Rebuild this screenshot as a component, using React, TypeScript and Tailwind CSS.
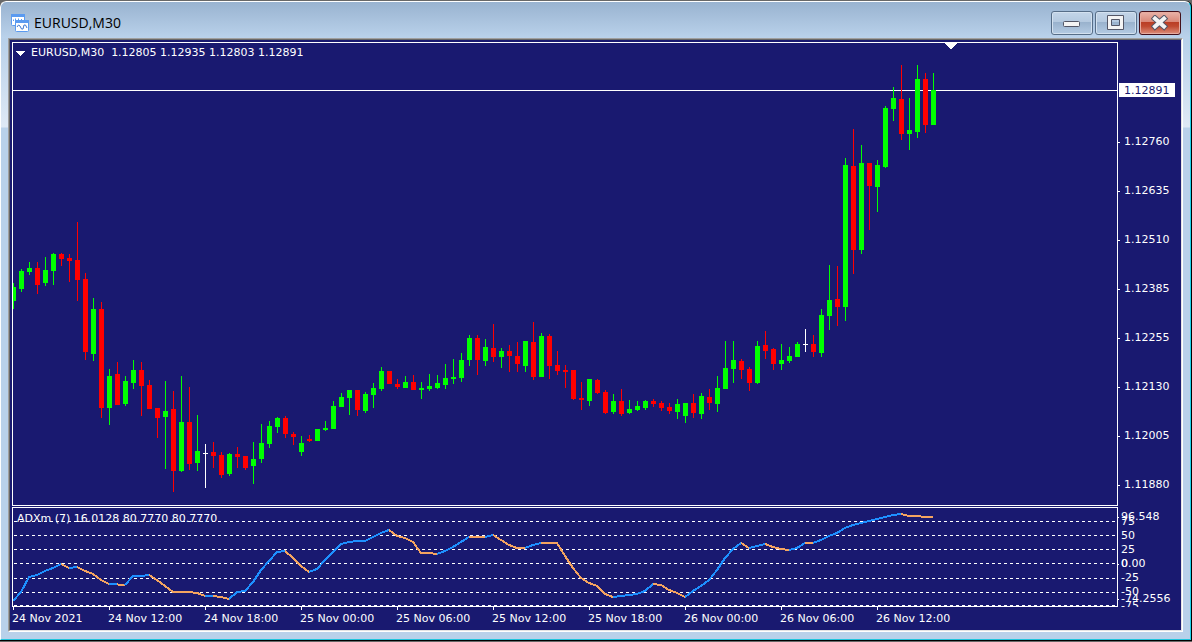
type Candle = [high: number, top: number, bottom: number, low: number, tone: "g" | "r" | "w"];

// one entry per half-hour bar, 8px apart, in window pixels
const CANDLES: Candle[] = [
  [283, 287, 301, 309, "g"], [269, 271, 289, 292, "g"], [262, 268, 272, 275, "g"], [262, 268, 285, 294, "r"],
  [257, 270, 283, 286, "g"], [253, 254, 271, 285, "g"], [253, 254, 259, 266, "r"], [254, 258, 261, 282, "r"],
  [222, 260, 280, 301, "r"], [273, 279, 352, 360, "r"], [298, 309, 354, 361, "g"], [302, 309, 408, 418, "r"],
  [369, 376, 408, 425, "g"], [362, 374, 405, 405, "r"], [376, 381, 404, 406, "g"], [360, 370, 383, 389, "g"],
  [362, 370, 386, 416, "r"], [380, 385, 409, 409, "r"], [408, 408, 418, 438, "r"], [381, 411, 417, 469, "g"],
  [391, 409, 471, 492, "r"], [376, 422, 471, 472, "g"], [387, 422, 464, 470, "r"], [415, 451, 463, 471, "g"],
  [444, 453, 454, 488, "w"], [442, 452, 456, 468, "r"], [452, 455, 475, 478, "r"], [453, 454, 474, 476, "g"],
  [447, 454, 457, 468, "r"], [456, 456, 468, 470, "r"], [442, 459, 466, 484, "g"], [424, 443, 459, 463, "g"],
  [421, 426, 444, 448, "g"], [417, 418, 427, 433, "g"], [416, 418, 434, 438, "r"], [432, 434, 437, 445, "r"],
  [436, 443, 452, 456, "g"], [435, 439, 441, 442, "r"], [429, 429, 441, 441, "g"], [421, 428, 430, 431, "g"],
  [401, 406, 429, 429, "g"], [393, 397, 407, 407, "g"], [390, 390, 398, 415, "g"], [390, 390, 410, 416, "r"],
  [392, 394, 411, 413, "g"], [383, 388, 395, 408, "g"], [367, 371, 389, 391, "g"], [371, 371, 384, 384, "r"],
  [379, 384, 387, 389, "r"], [376, 382, 388, 388, "g"], [375, 382, 390, 390, "r"], [382, 388, 390, 399, "g"],
  [374, 386, 389, 391, "g"], [375, 383, 388, 389, "g"], [364, 378, 385, 389, "g"], [359, 377, 379, 384, "g"],
  [353, 360, 378, 382, "g"], [335, 338, 360, 366, "g"], [335, 338, 360, 375, "r"], [339, 347, 361, 366, "g"],
  [324, 348, 357, 362, "r"], [348, 351, 357, 368, "g"], [345, 351, 356, 372, "r"], [342, 356, 364, 372, "r"],
  [341, 341, 366, 372, "g"], [322, 342, 377, 380, "r"], [333, 336, 377, 377, "g"], [334, 336, 366, 379, "r"],
  [351, 365, 371, 375, "r"], [365, 370, 372, 388, "r"], [370, 370, 399, 400, "r"], [382, 398, 400, 410, "r"],
  [379, 379, 401, 406, "g"], [379, 380, 393, 394, "r"], [390, 392, 413, 414, "r"], [394, 401, 412, 414, "g"],
  [389, 401, 414, 416, "r"], [400, 409, 413, 414, "g"], [401, 406, 410, 411, "g"], [400, 401, 408, 410, "g"],
  [399, 401, 404, 407, "r"], [401, 403, 408, 411, "r"], [403, 407, 411, 414, "r"], [399, 404, 412, 419, "g"],
  [403, 403, 416, 423, "g"], [394, 403, 413, 418, "r"], [393, 396, 414, 419, "g"], [389, 397, 403, 410, "r"],
  [376, 388, 404, 412, "g"], [341, 368, 389, 389, "g"], [341, 360, 369, 383, "g"], [359, 361, 370, 379, "r"],
  [367, 369, 383, 391, "r"], [341, 346, 383, 384, "g"], [331, 345, 351, 359, "r"], [348, 349, 364, 370, "r"],
  [344, 360, 364, 370, "g"], [347, 356, 361, 363, "g"], [342, 344, 357, 357, "g"], [329, 344, 345, 352, "w"],
  [335, 344, 352, 357, "r"], [309, 315, 353, 357, "g"], [265, 300, 316, 330, "g"], [266, 299, 307, 326, "r"],
  [158, 165, 307, 321, "g"], [129, 166, 250, 274, "r"], [145, 163, 250, 254, "g"], [163, 163, 186, 230, "r"],
  [160, 165, 187, 212, "g"], [106, 108, 167, 168, "g"], [87, 98, 109, 121, "g"], [65, 99, 134, 140, "r"],
  [98, 130, 134, 150, "g"], [65, 79, 132, 138, "g"], [73, 79, 125, 133, "r"], [73, 90, 125, 125, "g"],
];

const TONES = { g: "#00ff00", r: "#ff0000", w: "#ffffff" };

const RISING = "#1e90ff";
const FALLING = "#f4a460";

// each run starts where the previous one ended
const ADX_RUNS: { color: string; points: string }[] = [
  { color: RISING, points: "13,601 21,592 29,577 37,575 45,571 53,568 61,564" },
  { color: FALLING, points: "61,564 69,568" },
  { color: RISING, points: "69,568 77,567" },
  { color: FALLING, points: "77,567 85,571 93,574 101,580 109,584" },
  { color: RISING, points: "109,584 117,584" },
  { color: FALLING, points: "117,584 119,585 125,585" },
  { color: RISING, points: "125,585 133,576 141,576 149,575" },
  { color: FALLING, points: "149,575 157,580 165,586 173,592 181,592 189,592 197,593 205,596" },
  { color: RISING, points: "205,596 213,596" },
  { color: FALLING, points: "213,596 221,597 229,599" },
  { color: RISING, points: "229,599 237,592 245,591 253,582 261,570 269,561 277,552 285,551" },
  { color: FALLING, points: "285,551 293,558 301,566 309,572" },
  { color: RISING, points: "309,572 317,569 325,560 333,552 341,544 349,542 357,541 365,541 373,537 381,533 389,530" },
  { color: FALLING, points: "389,530 397,536 405,538 413,542 421,553 429,553 437,554" },
  { color: RISING, points: "437,554 445,551 453,547 461,542 469,537" },
  { color: FALLING, points: "469,537 477,537 485,537" },
  { color: RISING, points: "485,537 493,535" },
  { color: FALLING, points: "493,535 501,540 509,545 517,548 525,548" },
  { color: RISING, points: "525,548 533,545 541,543" },
  { color: FALLING, points: "541,543 549,543 557,543 565,556 573,568 581,578 589,583 597,586 605,594 613,597" },
  { color: RISING, points: "613,597 621,596 629,595 637,594 645,591 653,584" },
  { color: FALLING, points: "653,584 661,585 669,590 677,593 685,597" },
  { color: RISING, points: "685,597 693,591 701,586 709,580 717,570 725,558 733,549 741,543" },
  { color: FALLING, points: "741,543 749,548" },
  { color: RISING, points: "749,548 757,546 765,544" },
  { color: FALLING, points: "765,544 773,547 781,549 789,550" },
  { color: RISING, points: "789,550 797,548 805,543" },
  { color: FALLING, points: "805,543 813,543" },
  { color: RISING, points: "813,543 821,540 829,536 837,533 845,528 853,525 861,523 869,521 877,519 885,517 893,515 901,514" },
  { color: FALLING, points: "901,514 909,516 917,516 925,517 933,517" },
];

const LEVEL_LINES = [521, 535, 549, 563, 578, 592, 605];
const LEVEL_LABELS = ["75", "50", "25", "0", "-25", "-50", "-75"];

const PRICES = ["1.12760", "1.12635", "1.12510", "1.12385", "1.12255", "1.12130", "1.12005", "1.11880"];

const TIMES = [
  "24 Nov 2021",
  "24 Nov 12:00",
  "24 Nov 18:00",
  "25 Nov 00:00",
  "25 Nov 06:00",
  "25 Nov 12:00",
  "25 Nov 18:00",
  "26 Nov 00:00",
  "26 Nov 06:00",
  "26 Nov 12:00",
];

export default function App() {
  return (
    <div className="min-h-screen flex flex-col bg-[#686868] pt-px font-['DejaVu_Sans',sans-serif]">
      <div className="flex-1 flex flex-col rounded-t-md border-r border-b border-black mb-px bg-black">
        <div className="flex-1 flex flex-col rounded-t-md border border-t-white border-l-white border-r-[#1fd3ea] border-b-[#1fc4dc] bg-[linear-gradient(#b9d1ea_40px,#dfe9f5_125px,#b9d1ea_126px)]">
          <TitleBar />
          <main className="flex-1 flex flex-col mx-[7px] mb-[7px] border border-t-[#a0a0a0] border-l-[#a0a0a0] border-r-white border-b-white">
            <div className="flex-1 flex flex-col border border-t-[#696969] border-l-[#696969] border-r-[#e3e3e3] border-b-[#e3e3e3]">
              <Chart />
            </div>
          </main>
        </div>
      </div>
    </div>
  );
}

function TitleBar() {
  return (
    <header className="h-9 pt-1.5 pl-2.5 pr-[9px] flex items-center rounded-t-md bg-linear-to-b from-[#99b3d0] to-[#bad2eb]">
      <ChartIcon />
      <h1 className="ml-[5px] flex-1 text-sm text-black font-['Open_Sans',sans-serif]">EURUSD,M30</h1>
      <div className="flex gap-0.5">
        <button
          type="button"
          aria-label="Minimize"
          className="w-[42px] h-6 flex items-center justify-center rounded-[3px] border border-[#566d87] bg-[linear-gradient(#c3d5e8,#b4c9df_45%,#98b1cc_45%,#b4cbe3)] shadow-[inset_0_0_0_1px_#d3e1ef]"
        >
          <svg width="18" height="16" viewBox="0 0 18 16">
            <rect x=".5" y="6.5" width="16" height="5" rx="1" fill="#f4f4f4" stroke="#535666" />
          </svg>
        </button>
        <button
          type="button"
          aria-label="Maximize"
          className="w-[42px] h-6 flex items-center justify-center rounded-[3px] border border-[#566d87] bg-[linear-gradient(#c3d5e8,#b4c9df_45%,#98b1cc_45%,#b4cbe3)] shadow-[inset_0_0_0_1px_#d3e1ef]"
        >
          <svg width="18" height="16" viewBox="0 0 18 16">
            <path
              d="M.5 .5h16v14h-16zM4.500 4.500v6h8v-6z"
              fill="#f4f4f4"
              fillRule="evenodd"
              stroke="#535666"
              strokeLinejoin="round"
            />
          </svg>
        </button>
        <button
          type="button"
          aria-label="Close"
          className="w-[42px] h-6 flex items-center justify-center rounded-[3px] border border-[#43101a] bg-[linear-gradient(#e9b3a9,#d98878_45%,#b93d24_45%,#c04a30_65%,#dc8f7c)] shadow-[inset_0_0_0_1px_#e6aca0]"
        >
          <svg width="18" height="16" viewBox="0 0 18 16" fill="none" strokeLinecap="square">
            <path d="M4 3.500l9 8M13 3.500l-9 8" stroke="#535666" strokeWidth="6" />
            <path d="M4 3.500l9 8M13 3.500l-9 8" stroke="#f4f4f4" strokeWidth="4" />
          </svg>
        </button>
      </div>
    </header>
  );
}

function ChartIcon() {
  return (
    <svg width="18" height="18" viewBox="0 0 18 18" aria-hidden="true">
      <rect x=".5" y=".5" width="13" height="11" rx="1" fill="#fff" stroke="#5a9af0" />
      <path d="M0 0h14v3H0z" fill="#5a9af0" />
      <path d="M2.500 7V5.500M4.500 7V4.500M7.500 6V4.500M10.500 6V5" stroke="#5a9af0" />
      <rect x="4.500" y="6.500" width="13" height="11" rx="1" fill="#fff" stroke="#5a9af0" />
      <path d="M4 6h14v3H4z" fill="#5a9af0" />
      <path d="M6 13l1.500-2 1.500 1 1.500 3 1.500 0 1-4 1.500 0 1.500 3" fill="none" stroke="#3f78d0" />
    </svg>
  );
}

function Chart() {
  return (
    <div className="flex-1 grid grid-cols-[minmax(0,1fr)_63px] grid-rows-[minmax(464px,1fr)_101px_23px] pt-0.5 pl-0.5 bg-[#191970] text-white text-[11px]">
      <section aria-label="Price" className="relative border border-white overflow-hidden">
        <PricePlot />
        <div className="absolute top-px left-[3px] flex items-center gap-1 leading-[18px] whitespace-pre">
          <svg width="9" height="5" viewBox="0 0 9 5" shapeRendering="crispEdges">
            <path d="M0 0h9L5 5H4z" fill="#fff" />
          </svg>
          <span className="ml-0.5">EURUSD,M30  1.12805 1.12935 1.12803 1.12891</span>
        </div>
      </section>

      <div className="relative pt-[91px] flex flex-col gap-[31px]">
        {PRICES.map((price) => (
          <div key={price} className="h-[18px] flex items-center">
            <span className="w-0.5 h-px bg-white" />
            <span className="ml-1">{price}</span>
          </div>
        ))}
        {/* current bid */}
        <div className="absolute top-[41px] left-px w-14 h-3.5 pl-[5px] leading-4 bg-white text-[#191970]">
          1.12891
        </div>
      </div>

      <section aria-label="ADXm" className="relative mt-px border border-white overflow-hidden">
        <AdxPlot />
        <div className="absolute top-0.5 left-1 leading-[18px]">ADXm (7) 16.0128 80.7770 80.7770</div>
      </section>

      <div className="relative">
        <div className="h-[101px] pt-[9px] pl-[3px] overflow-hidden leading-[14px]">
          {LEVEL_LABELS.map((level) => (
            <div key={level}>{level}</div>
          ))}
        </div>
        {/* scale maximum, zero and minimum print over the level labels */}
        <div className="absolute inset-0 pt-1 flex flex-col leading-[14px]">
          <ScaleLabel>96.548</ScaleLabel>
          <div className="mt-[33px]">
            <ScaleLabel>0.00</ScaleLabel>
          </div>
          <div className="mt-[21px]">
            <ScaleLabel>-74.2556</ScaleLabel>
          </div>
        </div>
      </div>

      <div className="col-span-2 flex overflow-hidden">
        {TIMES.map((time) => (
          <div key={time} className="w-24 shrink-0 whitespace-nowrap">
            <div className="ml-px w-px h-[3px] bg-white" />
            <div className="leading-[18px]">{time}</div>
          </div>
        ))}
      </div>
    </div>
  );
}

function ScaleLabel({ children }: { children: string }) {
  return (
    <div className="flex items-center">
      <span className="w-px h-px bg-white" />
      <span className="ml-0.5">{children}</span>
    </div>
  );
}

function PricePlot() {
  return (
    <svg className="block w-full h-full" shapeRendering="crispEdges" role="img" aria-label="EURUSD candles">
      <rect y="47" width="100%" height="1" fill="#fff" />
      <g transform="translate(-13 -43)">
        <path d="M944 43h13l-6 6h-1z" fill="#fff" />
        {CANDLES.map(([high, top, bottom, low, tone], i) => {
          const x = 13 + i * 8;
          return (
            <g key={i} fill={TONES[tone]}>
              <rect x={x} y={high} width="1" height={low - high} />
              <rect x={x - 2} y={top} width="5" height={bottom - top} />
            </g>
          );
        })}
      </g>
    </svg>
  );
}

function AdxPlot() {
  return (
    <svg className="block w-full h-full" shapeRendering="crispEdges" role="img" aria-label="ADXm line">
      {LEVEL_LINES.map((y) => (
        <line
          key={y}
          x1="1"
          x2="100%"
          y1={y - 507.5}
          y2={y - 507.5}
          stroke="#fff"
          strokeDasharray="3 3"
        />
      ))}
      <g transform="translate(-13 -508)" fill="none" strokeWidth="2">
        {ADX_RUNS.map(({ color, points }) => (
          <polyline key={points} points={points} stroke={color} />
        ))}
      </g>
    </svg>
  );
}
